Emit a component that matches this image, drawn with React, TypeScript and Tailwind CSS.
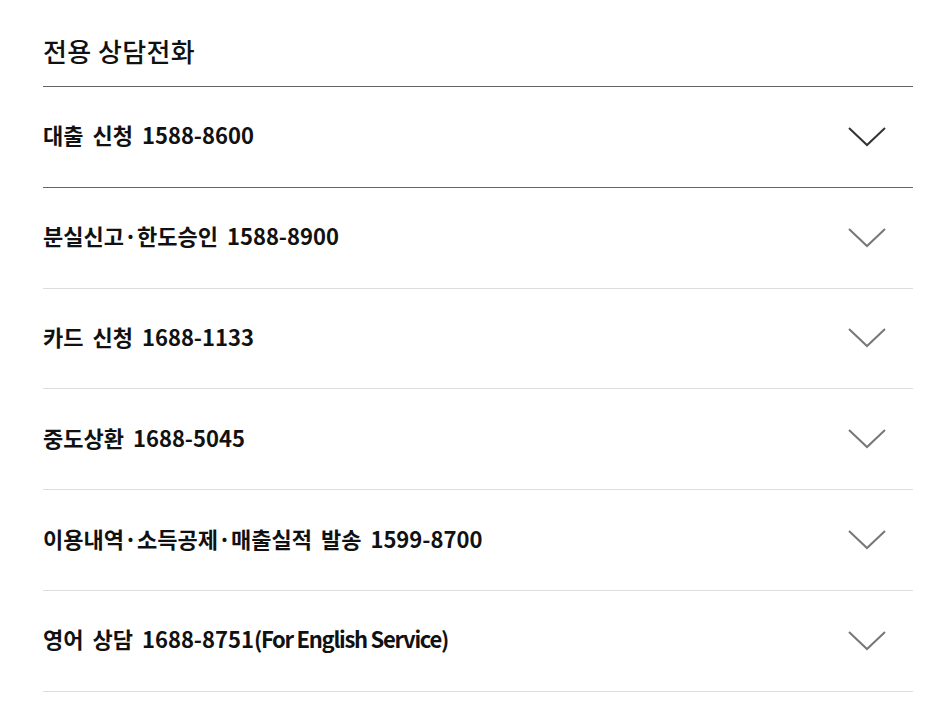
import React from "react";

const rows: { label: string; note?: string }[] = [
  { label: "대출 신청 1588-8600" },
  { label: "분실신고·한도승인 1588-8900" },
  { label: "카드 신청 1688-1133" },
  { label: "중도상환 1688-5045" },
  { label: "이용내역·소득공제·매출실적 발송 1599-8700" },
  { label: "영어 상담 1688-8751", note: "(For English Service)" },
];

function Chevron({ dark }: { dark: boolean }) {
  return (
    <svg width="38" height="20" viewBox="0 0 38 20" fill="none">
      <polyline
        points="1,1 19,18 37,1"
        stroke={dark ? "#333333" : "#777777"}
        strokeWidth="2"
        fill="none"
      />
    </svg>
  );
}

export default function App() {
  return (
    <div
      className="min-h-screen w-full bg-white pl-[43px] pr-[35px] text-[#111]"
      style={{ fontFamily: '"Noto Sans CJK KR", "Noto Sans", sans-serif' }}
    >
      <h2 className="pt-[33px] pb-[17px] text-[26px] leading-9 font-medium tracking-[0.4px] border-b border-[#666]">
        전용 상담전화
      </h2>
      {rows.map((row, i) => (
        <div
          key={row.label}
          className={
            i === 0
              ? "flex h-[100.8px] items-center justify-between border-b border-[#666]"
              : "flex h-[100.8px] items-center justify-between border-b border-[#ddd]"
          }
        >
          <span className="pb-[4px] text-[22px] font-bold">
            <span className="[word-spacing:4px]">{row.label}</span>
            {row.note && <span className="tracking-[-1.3px]">{row.note}</span>}
          </span>
          <span className="mr-[27px] flex">
            <Chevron dark={i === 0} />
          </span>
        </div>
      ))}
    </div>
  );
}
